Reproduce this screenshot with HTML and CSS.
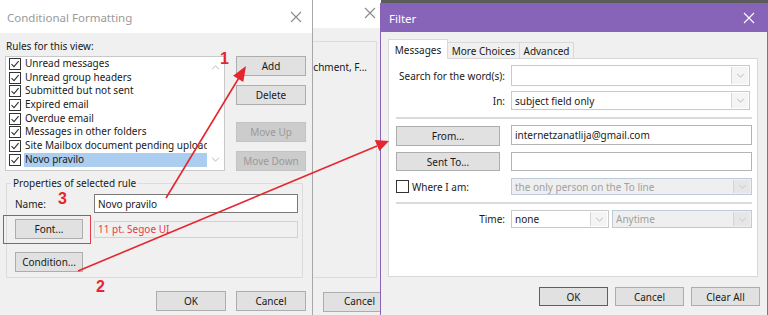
FILE: index.html
```html
<!DOCTYPE html>
<html>
<head>
<meta charset="utf-8">
<link rel="stylesheet" href="styles.css">
</head>
<body>
<div class="desk">

  <div class="win bgwin">
    <div class="bg-title">
      <svg class="xicon" viewBox="0 0 12 12"><path d="M1 1L11 11M11 1L1 11"/></svg>
    </div>
    <div class="bg-body">
      <div class="bg-panel"><div class="bg-text">Attachment, F...</div></div>
      <div class="bg-foot"><div class="btn bg-cancel">Cancel</div></div>
    </div>
  </div>

  <div class="win cf">
    <div class="cf-title">
      <span>Conditional Formatting</span>
      <svg class="xicon" viewBox="0 0 12 12"><path d="M1 1L11 11M11 1L1 11"/></svg>
    </div>
    <div class="cf-body">
      <div class="rules-label">Rules for this view:</div>
      <div class="rules-row">
        <div class="list">
          <div class="items">
            <div class="item"><span class="cb"><svg viewBox="0 0 10 10"><path d="M1.5 5.2L4 7.6L8.6 2.2"/></svg></span><span class="itxt">Unread messages</span></div>
            <div class="item"><span class="cb"><svg viewBox="0 0 10 10"><path d="M1.5 5.2L4 7.6L8.6 2.2"/></svg></span><span class="itxt">Unread group headers</span></div>
            <div class="item"><span class="cb"><svg viewBox="0 0 10 10"><path d="M1.5 5.2L4 7.6L8.6 2.2"/></svg></span><span class="itxt">Submitted but not sent</span></div>
            <div class="item"><span class="cb"><svg viewBox="0 0 10 10"><path d="M1.5 5.2L4 7.6L8.6 2.2"/></svg></span><span class="itxt">Expired email</span></div>
            <div class="item"><span class="cb"><svg viewBox="0 0 10 10"><path d="M1.5 5.2L4 7.6L8.6 2.2"/></svg></span><span class="itxt">Overdue email</span></div>
            <div class="item"><span class="cb"><svg viewBox="0 0 10 10"><path d="M1.5 5.2L4 7.6L8.6 2.2"/></svg></span><span class="itxt">Messages in other folders</span></div>
            <div class="item"><span class="cb"><svg viewBox="0 0 10 10"><path d="M1.5 5.2L4 7.6L8.6 2.2"/></svg></span><span class="itxt">Site Mailbox document pending upload</span></div>
            <div class="item"><span class="cb"><svg viewBox="0 0 10 10"><path d="M1.5 5.2L4 7.6L8.6 2.2"/></svg></span><span class="itxt sel">Novo pravilo</span></div>
          </div>
          <div class="vscroll">
            <svg class="chev" viewBox="0 0 10 6"><path d="M1 5L5 1L9 5"/></svg>
            <svg class="chev" viewBox="0 0 10 6"><path d="M1 1L5 5L9 1"/></svg>
          </div>
        </div>
        <div class="btncol">
          <div class="btn w70">Add</div>
          <div class="btn w70">Delete</div>
          <div class="btn w70 dis gap-top">Move Up</div>
          <div class="btn w70 dis">Move Down</div>
        </div>
      </div>

      <fieldset class="props">
        <legend>Properties of selected rule</legend>
        <div class="prow name-row">
          <span class="plabel">Name:</span>
          <div class="tbox">Novo pravilo</div>
        </div>
        <div class="prow font-row">
          <div class="btn pbtn">Font...</div>
          <div class="fontbox">11 pt. Segoe UI</div>
        </div>
        <div class="prow cond-row">
          <div class="btn pbtn">Condition...</div>
        </div>
      </fieldset>

      <div class="cf-foot">
        <div class="btn w70">OK</div>
        <div class="btn w70">Cancel</div>
      </div>
    </div>
    <div class="redbox"></div>
    <span class="num n1">1</span>
    <span class="num n3">3</span>
    <span class="num n2">2</span>
  </div>

  <div class="win filter">
    <div class="f-title">
      <span>Filter</span>
      <svg class="xicon white" viewBox="0 0 12 12"><path d="M1 1L11 11M11 1L1 11"/></svg>
    </div>
    <div class="f-body">
      <div class="tabs">
        <div class="tab on">Messages</div>
        <div class="tab t2">More Choices</div>
        <div class="tab t3">Advanced</div>
      </div>
      <div class="panel">
        <div class="frow r-search">
          <span class="flabel">Search for the word(s):</span>
          <div class="combo short"><span class="ctext"></span><span class="cbtn"><svg class="chev" viewBox="0 0 10 6"><path d="M1 1L5 5L9 1"/></svg></span></div>
        </div>
        <div class="frow r-in">
          <span class="flabel">In:</span>
          <div class="combo short"><span class="ctext">subject field only</span><span class="cbtn"><svg class="chev" viewBox="0 0 10 6"><path d="M1 1L5 5L9 1"/></svg></span></div>
        </div>
        <div class="sep"></div>
        <div class="frow r-from">
          <div class="btn fbtn">From...</div>
          <div class="ftext">internetzanatlija@gmail.com</div>
        </div>
        <div class="frow r-sent">
          <div class="btn fbtn">Sent To...</div>
          <div class="ftext"></div>
        </div>
        <div class="frow r-where">
          <span class="wlabel"><span class="cbox"></span>Where I am:</span>
          <div class="combo dcombo"><span class="ctext">the only person on the To line</span><span class="cbtn"><svg class="chev" viewBox="0 0 10 6"><path d="M1 1L5 5L9 1"/></svg></span></div>
        </div>
        <div class="sep sep2"></div>
        <div class="frow r-time">
          <span class="flabel">Time:</span>
          <div class="timepair">
            <div class="combo tnone"><span class="ctext">none</span><span class="cbtn"><svg class="chev" viewBox="0 0 10 6"><path d="M1 1L5 5L9 1"/></svg></span></div>
            <div class="combo dcombo tany"><span class="ctext">Anytime</span><span class="cbtn"><svg class="chev" viewBox="0 0 10 6"><path d="M1 1L5 5L9 1"/></svg></span></div>
          </div>
        </div>
      </div>
      <div class="f-foot">
        <div class="btn fb ok">OK</div>
        <div class="btn fb">Cancel</div>
        <div class="btn fb">Clear All</div>
      </div>
    </div>
  </div>

  <svg class="arrows" viewBox="0 0 768 315">
    <line x1="166" y1="198" x2="238.5" y2="78.5"/>
    <polygon points="246,66 243.3,81.9 233.1,75.7"/>
    <line x1="78" y1="271" x2="377" y2="146"/>
    <polygon points="389,141 379.4,151 374.8,140"/>
  </svg>
</div>
</body>
</html>
```

FILE: styles.css
```css
* { box-sizing: border-box; }
html, body { margin: 0; padding: 0; }
body {
  font-family: "Noto Sans", "Open Sans", sans-serif;
  font-size: 10px;
  color: #1a1a1a;
}
.desk {
  position: relative;
  width: 768px;
  height: 315px;
  overflow: hidden;
  background: #5b5b5b;
}
.win { position: absolute; }

.xicon { width: 12px; height: 12px; }
.xicon path { stroke: #8a8a8a; stroke-width: 1.1; fill: none; }
.xicon.white path { stroke: #fff; }

/* background window */
.bgwin {
  left: 250px; top: 0; width: 131px; height: 315px;
  background: #f0f0f0;
  display: flex; flex-direction: column;
}
.bg-title {
  height: 28px; background: #fff;
  display: flex; align-items: center; justify-content: flex-end;
  padding-right: 11px;
  padding-bottom: 2px;
}
.bg-title .xicon { margin-right: -6px; }
.bg-body { flex: 1; display: flex; flex-direction: column; }
.bg-panel {
  margin: 13px 4px 0 0;
  height: 237px;
  border: 1px solid #dcdcdc;
  padding-top: 18px;
  display: flex; justify-content: flex-end;
  padding-right: 9px;
}
.bg-foot { padding: 14px 0 0 73px; }
.bg-cancel { width: 70px; height: 24px; justify-content: flex-start; padding-left: 3px; padding-bottom: 2px; }

/* buttons */
.btn {
  display: flex; align-items: center; justify-content: center;
  background: #e1e1e1;
  border: 1px solid #adadad;
  height: 20px;
  white-space: nowrap;
}
.btn.dis { background: #cccccc; border-color: #c4c4c4; color: #9a9a9a; }
.w70 { width: 70px; }

/* conditional formatting */
.cf {
  left: 0; top: 0; width: 313px; height: 315px;
  background: #f0f0f0;
  border-right: 1px solid #a8a8a8;
}
.cf-title {
  height: 33px; background: #fff;
  display: flex; align-items: center; justify-content: space-between;
  padding: 1px 10px 0 7px;
  font-size: 11.5px; color: #9a9a9a;
}
.cf-body { padding: 6px 6px 0 5px; }
.rules-label { height: 15px; line-height: 15px; padding-left: 1px; margin-bottom: 2px; }
.rules-row { display: flex; gap: 11px; }
.list {
  width: 220px; height: 115px;
  border: 1px solid #c9c9c9;
  background: #fff;
  display: flex;
  overflow: hidden;
}
.items { flex: 1; min-width: 0; overflow: hidden; }
.item { display: flex; align-items: center; height: 13.7px; white-space: nowrap; }
.cb {
  flex: none;
  width: 12px; height: 12px;
  border: 1px solid #333;
  margin: 0 3px 0 3px;
  background: #fff;
  display: flex;
}
.cb svg { width: 10px; height: 10px; }
.cb path { stroke: #333; stroke-width: 1.1; fill: none; }
.itxt { line-height: 13.7px; padding-left: 1px; }
.itxt.sel { background: #aacdf0; flex: 1; }
.vscroll {
  width: 17px; flex: none;
  display: flex; flex-direction: column; justify-content: space-between; align-items: center;
  padding: 8px 0 8px;
}
.chev { width: 9px; height: 5px; }
.chev path { stroke: #b8b8b8; stroke-width: 1.2; fill: none; }
.btncol { display: flex; flex-direction: column; gap: 9px; }
.btncol .gap-top { margin-top: 8px; }

.props {
  margin: 5px 3px 0 1px;
  border: 1px solid #dcdcdc;
  padding: 0 4px 5px 8px;
  height: 102px;
}
.props legend { padding: 0 2px; margin-left: -4px; line-height: 15px; }
.prow { display: flex; align-items: center; }
.name-row { margin-top: 3px; }
.plabel { width: 79px; }
.tbox {
  width: 204px; height: 19px;
  background: #fff; border: 1px solid #7a7a7a;
  padding-left: 3px; display: flex; align-items: center;
}
.font-row { margin-top: 6px; }
.pbtn { width: 68px; }
.fontbox {
  margin-left: 11px;
  width: 204px; height: 17px;
  border: 1px solid #d2d2d2;
  background: #f0f0f0;
  color: #e8394a;
  padding-left: 3px; display: flex; align-items: center;
}
.cond-row { margin-top: 13px; }
.cf-foot { display: flex; justify-content: flex-end; gap: 10px; margin-top: 13px; padding-right: 0; }

.redbox {
  position: absolute; left: 3px; top: 215px; width: 88px; height: 29px;
  border: 1.5px solid #e8394a;
}
.num {
  position: absolute;
  color: #e5262e; font-weight: bold; font-size: 16px;
  font-family: "Liberation Sans", sans-serif;
  line-height: 16px;
}
.n1 { left: 220px; top: 51px; }
.n3 { left: 58px; top: 191px; }
.n2 { left: 96px; top: 279px; }

/* filter dialog */
.filter {
  left: 380px; top: 3px; width: 388px; height: 312px;
  background: #f0f0f0;
  border: 1px solid #8764b8;
  border-bottom: none;
}
.f-title {
  height: 28px; background: #8764b8; color: #fff;
  display: flex; align-items: center; justify-content: space-between;
  padding: 0 12px 0 8px;
  font-size: 11.5px;
}
.f-body { padding: 7px 9px 0 7px; }
.tabs { display: flex; align-items: flex-end; height: 19px; }
.tab {
  height: 16px; padding: 0;
  border: 1px solid #d9d9d9; border-bottom: none;
  display: flex; align-items: center; justify-content: center;
  background: #f0f0f0;
  margin-left: -1px;
}
.tab:first-child { margin-left: 0; }
.tab.on {
  height: 20px; background: #fff; margin-bottom: -1px;
  position: relative; z-index: 1; width: 60px;
}
.t2 { width: 73px; }
.t3 { width: 55px; }
.panel {
  height: 219px;
  background: #fff;
  border: 1px solid #d9d9d9;
  padding: 6px 5px 0 7px;
}
.frow { display: grid; grid-template-columns: 109px 1fr; column-gap: 6px; align-items: center; }
.flabel { text-align: right; white-space: nowrap; }
.combo {
  display: flex; height: 100%;
  border: 1px solid #c9c9c9; background: #fff;
}
.combo.short { margin-right: 2px; }
.ctext { flex: 1; display: flex; align-items: center; padding-left: 3px; white-space: nowrap; overflow: hidden; }
.cbtn {
  width: 17px; flex: none;
  display: flex; align-items: center; justify-content: center;
  border-left: 1px solid #d6d6d6; background: #f4f4f4;
  margin: 1px 1px 1px 0;
}
.r-search { height: 21px; }
.r-in { height: 19px; margin-top: 5px; }
.sep { height: 2px; background: #dadada; margin: 7px 0 6px; }
.r-from { height: 20px; }
.r-sent { height: 19px; margin-top: 7px; }
.r-where { height: 17px; margin-top: 7px; }
.sep2 { margin: 7px 0 6px; }
.r-time { height: 18px; }
.fbtn { width: 104px; height: 100%; }
.r-from .fbtn { margin-top: 2px; }
.ftext {
  height: 100%; border: 1px solid #b4b4b4; background: #fff;
  display: flex; align-items: center; padding-left: 3px;
}
.wlabel { display: flex; align-items: center; }
.cbox { width: 13px; height: 13px; border: 1px solid #333; background: #fff; margin-right: 3px; }
.dcombo { background: #efefef; border-color: #bccbdb; color: #a0a0a0; }
.dcombo .cbtn { background: #e6e6e6; border-left-color: #d4d4d4; }
.dcombo .chev path { stroke: #c8c8c8; }
.timepair { display: flex; gap: 3px; height: 100%; }
.tnone { width: 98px; }
.tany { flex: 1; }
.f-foot { display: flex; justify-content: flex-end; gap: 7px; margin-top: 10px; padding-right: 0; margin-right: -2px; }
.fb { width: 69px; height: 19px; }
.fb.ok { border-color: #0078d7; }

.arrows {
  position: absolute; left: 0; top: 0; width: 768px; height: 315px;
  pointer-events: none;
}
.arrows line { stroke: #e5262e; stroke-width: 1.6; }
.arrows polygon { fill: #e5262e; }
```
